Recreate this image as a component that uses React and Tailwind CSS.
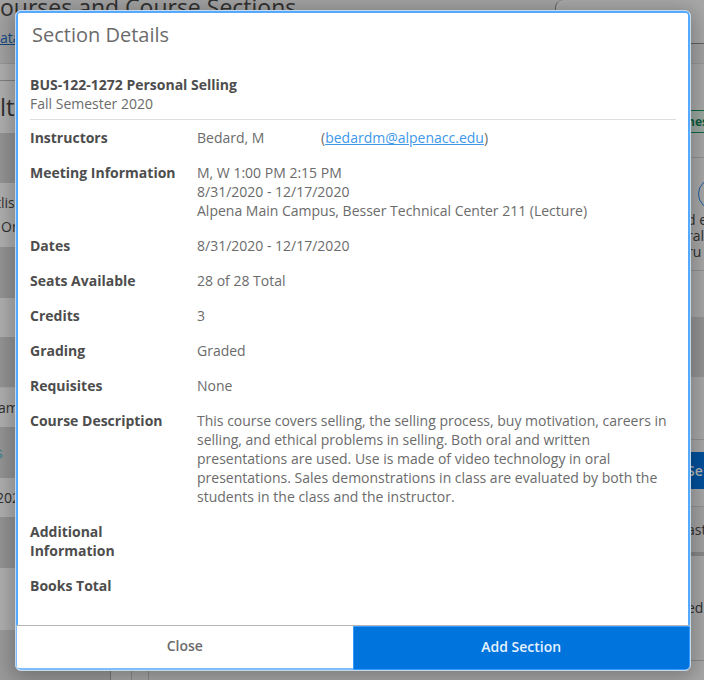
const details = [
  { label: 'Dates', value: '8/31/2020 - 12/17/2020' },
  { label: 'Seats Available', value: '28 of 28 Total' },
  { label: 'Credits', value: '3' },
  { label: 'Grading', value: 'Graded' },
  { label: 'Requisites', value: 'None' },
  {
    label: 'Course Description',
    value:
      'This course covers selling, the selling process, buy motivation, careers in selling, and ethical problems in selling. Both oral and written presentations are used. Use is made of video technology in oral presentations. Sales demonstrations in class are evaluated by both the students in the class and the instructor.',
  },
];

function Row({ label, children }) {
  return (
    <div className="flex pb-4">
      <dt className="w-[167px] shrink-0 pr-4 font-bold text-[#4d4d4d]">{label}</dt>
      <dd className="min-w-0 flex-1">{children}</dd>
    </div>
  );
}

function FilterColumn() {
  return (
    <div className="-ml-1 w-[115px] shrink-0 border-r border-[#808080] bg-[#9a9a9a] whitespace-nowrap">
      <h2 className="h-[52px] bg-[#afafaf] pt-2 pl-1 text-[24px] leading-[36px]">lt:</h2>
      <div className="h-[50px] bg-[#949494]" />
      <div className="h-16 bg-[#afafaf] pt-2 leading-6">
        <p>tlis</p>
        <p className="pl-[5px]">On</p>
      </div>
      <div className="h-[51px] bg-[#949494]" />
      <div className="h-[39px] bg-[#afafaf]" />
      <div className="h-[51px] border-b border-[#a8a8a8] bg-[#949494]" />
      <div className="h-[39px] bg-[#afafaf] pl-[2px] leading-[39px]">am</div>
      <div className="h-[51px] bg-[#949494] leading-[51px] text-[#2f7f95]">s</div>
      <div className="h-[39px] bg-[#afafaf] leading-[39px]">202</div>
      <div className="h-[51px] bg-[#949494]" />
      <div className="h-[62px] bg-[#afafaf]" />
    </div>
  );
}

function ResultColumn() {
  return (
    <div className="w-[17px] overflow-hidden whitespace-nowrap">
      <div className="h-[77px] border-b border-[#929292] pt-[29px]">
        <div className="h-[23px] w-10 border-y border-[#0c6b45] bg-[#9ca8a2] text-[12px] leading-[21px] font-bold text-[#0c5c3c]">nes</div>
      </div>
      <div className="h-[113px] border-b border-[#929292] pt-5">
        <div className="mb-[2px] ml-[11px] size-8 rounded-full border border-[#1d5fa3]" />
        <p className="leading-4">d e</p>
        <p className="leading-4">ral</p>
        <p className="leading-4">ru</p>
      </div>
      <div className="h-[46px]" />
      <div className="h-[60px] bg-[#949494]" />
      <div className="h-[63px] border-b border-[#929292]" />
      <div className="h-[66px] pt-3">
        <div className="h-[37px] w-20 bg-[#00509b] leading-[37px] font-semibold text-[#b5b5b5]">Se</div>
      </div>
      <div className="h-[50px] border-t border-b-4 border-t-[#929292] border-b-[#888888] bg-[#a3a3a3] leading-[46px]">ast</div>
      <div className="h-[105px] border-b border-[#888888] leading-[104px]">ed</div>
    </div>
  );
}

function CatalogPage() {
  return (
    <div className="h-screen overflow-hidden bg-[#a8a8a8] text-[#303030]" aria-hidden="true">
      <div className="flex h-16 justify-between border-b border-[#969696] bg-[#a2a2a2]">
        <div>
          <h1 className="h-7 text-[23px] leading-[14px] whitespace-nowrap">ourses and Course Sections</h1>
          <a href="#catalog" className="text-[#124a82] underline">ata</a>
        </div>
        <div className="h-11 w-[149px] rounded-tl-lg border-b border-l border-[#606060] bg-[#a8a8a8]" />
      </div>
      <div className="flex items-start justify-between">
        <div>
          <div className="h-[17px] w-[110px] border-b border-[#808080] bg-[#afafaf]" />
          <FilterColumn />
          <div className="flex h-20">
            <div className="w-[111px] border-r border-[#757575] bg-[#9a9a9a]" />
            <div className="w-[21px] border-r border-[#8c8c8c]" />
            <div className="w-[17px] border-r border-[#8c8c8c]" />
          </div>
        </div>
        <div className="pt-[17px]">
          <ResultColumn />
        </div>
      </div>
    </div>
  );
}

function SectionDialog() {
  return (
    <div
      role="dialog"
      aria-labelledby="dialog-title"
      className="overflow-hidden rounded-md border border-[#c5d9e9] bg-white text-[#6b6b6b] shadow-[0_4px_20px_4px_rgba(0,0,0,0.25)]"
    >
      <div className="rounded-t border-2 border-b-0 border-[#55aaff] px-3 pt-1.5">
        <h2 id="dialog-title" className="px-[2px] text-[20px] leading-8">Section Details</h2>
        <div className="mt-6 border-b border-[#dedede] pb-1.5">
          <h3 className="font-bold text-[#4d4d4d]">BUS-122-1272 Personal Selling</h3>
          <p>Fall Semester 2020</p>
        </div>
        <dl className="pt-2 pb-3.5">
          <Row label="Instructors">
            <div className="flex">
              <span className="w-[124px]">Bedard, M</span>
              <span>
                (<a href="mailto:bedardm@alpenacc.edu" className="text-[#3d98ea] underline">bedardm@alpenacc.edu</a>)
              </span>
            </div>
          </Row>
          <Row label="Meeting Information">
            <p>M, W 1:00 PM 2:15 PM</p>
            <p>8/31/2020 - 12/17/2020</p>
            <p>Alpena Main Campus, Besser Technical Center 211 (Lecture)</p>
          </Row>
          {details.map((d) => (
            <Row key={d.label} label={d.label}>{d.value}</Row>
          ))}
          <Row label="Additional Information" />
          <Row label="Books Total" />
        </dl>
      </div>
      <div className="flex h-[45px] border-t border-[#b5b5b5]">
        <button type="button" className="flex-1 rounded-bl border-b-2 border-l border-[#7dbcff] pb-1 font-semibold">Close</button>
        <button type="button" className="flex-1 rounded-br border border-[#3399ff] bg-[#0074dd] pb-1 font-semibold text-[#e6f2fd]">Add Section</button>
      </div>
    </div>
  );
}

export default function App() {
  return (
    <div className="relative font-['Open_Sans','Noto_Sans',sans-serif] text-[14px] leading-[19px]">
      <CatalogPage />
      <div className="absolute inset-x-0 top-0 pt-2.5 pr-[13px] pl-[15px]">
        <SectionDialog />
      </div>
    </div>
  );
}
